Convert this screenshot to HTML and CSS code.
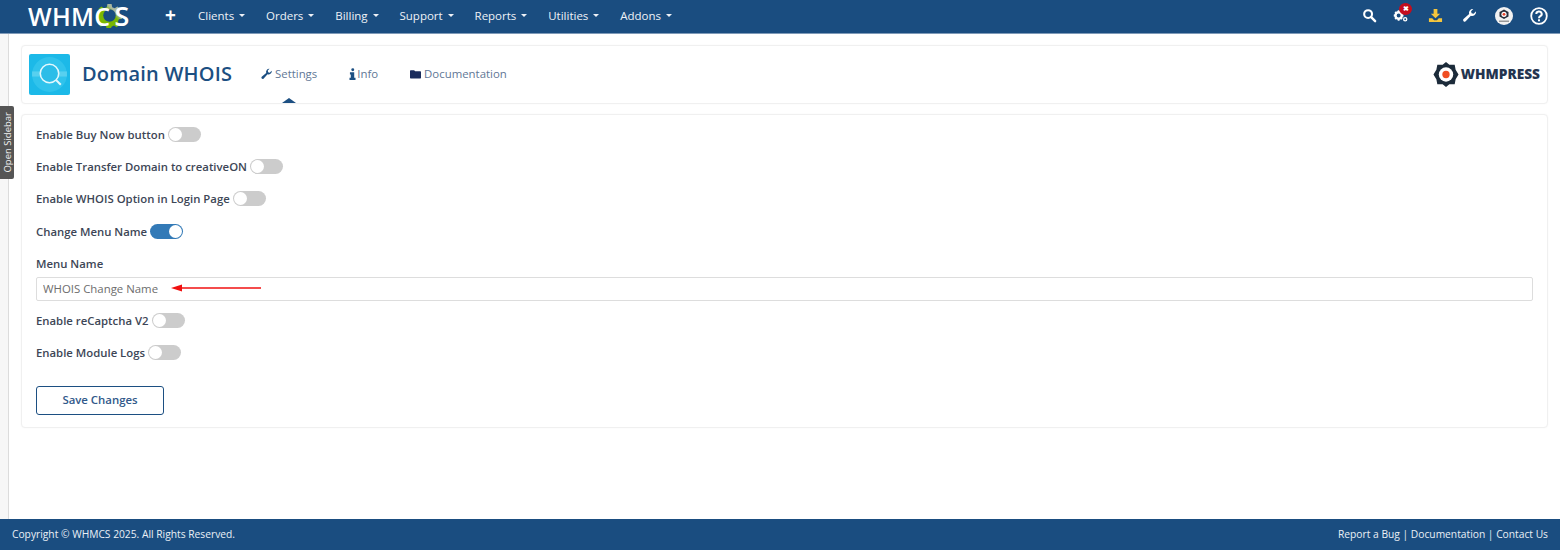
FILE: index.html
```html
<!DOCTYPE html>
<html lang="en">
<head>
<meta charset="utf-8">
<title>Domain WHOIS</title>
<link rel="stylesheet" href="styles.css">
</head>
<body>
<div class="app">
  <header class="topbar">
    <div class="logo"><svg class="logo-gear" viewBox="0 0 24 24"><defs><linearGradient id="gg" x1="0" y1="1" x2="1" y2="0"><stop offset="0.6" stop-color="#7ab800"/><stop offset="0.72" stop-color="#a9b7a0"/></linearGradient></defs><path fill="url(#gg)" d="M10 1h4l.6 3 2.400 1 2.600-1.700 2.800 2.800L20.700 8.700l1 2.300 2.300.6v3.400l-3 .6-1 2.400 1.700 2.600-2.800 2.800-2.600-1.700-2.400 1-.6 2.300h-4l-.6-3-2.400-1-2.600 1.700-2.800-2.800 1.700-2.600-1-2.400-3-.6v-3.400l3-.6 1-2.400L1.300 6.100l2.800-2.800L6.700 5l2.700-1z"/><circle cx="12" cy="12" r="6" fill="#1a4d80"/></svg><span class="logo-text">WHMC<span class="logo-s">S</span></span></div>
    <nav class="mainnav">
      <span class="plus">+</span>
      <a class="navitem">Clients<i class="caret"></i></a>
      <a class="navitem">Orders<i class="caret"></i></a>
      <a class="navitem">Billing<i class="caret"></i></a>
      <a class="navitem">Support<i class="caret"></i></a>
      <a class="navitem">Reports<i class="caret"></i></a>
      <a class="navitem">Utilities<i class="caret"></i></a>
      <a class="navitem">Addons<i class="caret"></i></a>
    </nav>
    <div class="tools">
      <svg class="tool" viewBox="0 0 16 16"><circle cx="6.500" cy="6.500" r="4.200" fill="none" stroke="#fff" stroke-width="2.200"/><path d="M9.800 9.800l4.200 4.200" stroke="#fff" stroke-width="2.600" stroke-linecap="round"/></svg>
      <span class="tool-cog">
        <svg class="tool" viewBox="0 0 16 16"><circle cx="6" cy="8" r="3.400" fill="none" stroke="#fff" stroke-width="2.600"/><path d="M6 2.500v2M6 11.500v2M.8 8h2M9.200 8h2M2.300 4.300l1.400 1.400M8.300 10.300l1.400 1.400M9.700 4.300L8.300 5.700M3.700 10.300l-1.400 1.400" stroke="#fff" stroke-width="2"/><circle cx="13" cy="12" r="1.700" fill="none" stroke="#fff" stroke-width="1.400"/></svg>
        <b class="badge">&#10006;</b>
      </span>
      <svg class="tool tool-dl" viewBox="0 0 16 16"><path fill="#f5c53d" d="M6 1h4v5h3l-5 5-5-5h3z"/><path fill="#f5c53d" d="M1 11h3.500l2 2h3l2-2H15v4H1z"/></svg>
      <svg class="tool tool-wrench" viewBox="0 0 16 16"><path fill="#fff" d="M15 4.300a4.200 4.200 0 0 1-5.600 4L4 14.200a1.700 1.700 0 0 1-2.400-2.400L7.600 6.500A4.200 4.200 0 0 1 12 1l-2.300 2.400.5 2.200 2.200.6L14.700 3.700c.2.200.3.400.3.600z"/></svg>
      <svg class="tool tool-avatar" viewBox="0 0 18 18"><circle cx="9" cy="9" r="9" fill="#f2f2f2"/><path fill="#2a2f3c" d="M9 2.500l4.500 2.400v4.700L9 12 4.500 9.600V4.900z"/><circle cx="9" cy="7.300" r="2.600" fill="#fff"/><circle cx="9" cy="7.300" r="1.400" fill="#e8432a"/><rect x="4" y="13.500" width="10" height="1.500" fill="#999"/></svg>
      <svg class="tool tool-help" viewBox="0 0 18 18"><circle cx="9" cy="9" r="7.800" fill="none" stroke="#fff" stroke-width="1.800"/><path d="M6.300 7a2.700 2.500 0 1 1 4 2.200c-.9.600-1.300 1-1.300 2" fill="none" stroke="#fff" stroke-width="2"/><rect x="8" y="12.300" width="2" height="2" fill="#fff"/></svg>
    </div>
  </header>

  <div class="body-row">
    <aside class="rail"></aside>
    <main class="content">
      <section class="card head">
        <div class="head-left">
          <svg class="mod-icon" viewBox="0 0 40 40"><rect width="40" height="40" rx="2" fill="#1cb9e8"/><circle cx="20" cy="20" r="17" fill="#30c3ec"/><rect x="3" y="17" width="34" height="5" fill="#58d0ef"/><circle cx="20" cy="19" r="9" fill="#2cbde8" stroke="#e4f8fd" stroke-width="1.500"/><path d="M26.500 25.500L31 30" stroke="#e4f8fd" stroke-width="2"/></svg>
          <h1>Domain WHOIS</h1>
          <nav class="tabs">
            <a class="tab active"><svg class="tab-ico" viewBox="0 0 16 16"><path fill="#1c4f82" d="M15 4.300a4.200 4.200 0 0 1-5.600 4L4 14.200a1.700 1.700 0 0 1-2.400-2.400L7.600 6.500A4.200 4.200 0 0 1 12 1l-2.300 2.400.5 2.200 2.200.6L14.700 3.700c.2.200.3.400.3.600z"/></svg>Settings</a>
            <a class="tab tab-info"><svg class="tab-ico" viewBox="0 0 8 14"><circle cx="4.300" cy="2" r="1.700" fill="#1c4f82"/><path fill="#1c4f82" d="M1 5h5v6.500h1.500V14h-7v-2.500H2V7.500H1z"/></svg>Info</a>
            <a class="tab tab-doc"><svg class="tab-ico" viewBox="0 0 16 13"><path fill="#1a2c5c" d="M0 2a1 1 0 0 1 1-1h5l1.500 1.500H15a1 1 0 0 1 1 1V12a1 1 0 0 1-1 1H1a1 1 0 0 1-1-1z"/></svg>Documentation</a>
          </nav>
        </div>
        <div class="brand">
          <svg class="brand-ico" viewBox="0 0 26 28"><path fill="#1c2b3a" d="M13 1l3.500 3H22l1 5 3 5-3 5-1 5h-5.500L13 27l-3.500-3H4l-1-5-3-5 3-5 1-5h5.500z"/><circle cx="13" cy="14" r="7.500" fill="#fff"/><circle cx="13" cy="14" r="3.800" fill="#f04e23"/></svg>
          <span>WHMPRESS</span>
        </div>
      </section>

      <section class="card form">
        <div class="row"><label>Enable Buy Now button</label><span class="switch"></span></div>
        <div class="row"><label>Enable Transfer Domain to creativeON</label><span class="switch"></span></div>
        <div class="row"><label>Enable WHOIS Option in Login Page</label><span class="switch"></span></div>
        <div class="row"><label>Change Menu Name</label><span class="switch on"></span></div>
        <div class="field">
          <label>Menu Name</label>
          <div class="input-wrap">
            <input class="input" type="text" value="WHOIS Change Name">
            <svg class="arrow" viewBox="0 0 90 10"><path d="M8 5h82" stroke="#f01010" stroke-width="1.500"/><path d="M0 5l11-3.500v7z" fill="#f01010"/></svg>
          </div>
        </div>
        <div class="row"><label>Enable reCaptcha V2</label><span class="switch"></span></div>
        <div class="row"><label>Enable Module Logs</label><span class="switch"></span></div>
        <button class="save" type="button">Save Changes</button>
      </section>
    </main>
  </div>

  <footer class="footer">
    <span>Copyright © WHMCS 2025. All Rights Reserved.</span>
    <span>Report a Bug | Documentation | Contact Us</span>
  </footer>
  <div class="sidebar-tab"><span>Open Sidebar</span></div>
</div>
</body>
</html>
```
FILE: styles.css
```css
* { box-sizing: border-box; }
html, body { margin: 0; height: 100%; background: #fff; }
body { font-family: "Open Sans", "Liberation Sans", sans-serif; color: #333; overflow: hidden; }
.app { height: 550px; display: flex; flex-direction: column; position: relative; }

.topbar { height: 34px; flex: none; background: #1a4d80; border-bottom: 1px solid #7f9ab8; display: flex; align-items: center; color: #fff; padding-bottom: 2px; }
.logo { width: 143px; padding-left: 28px; display: flex; align-items: center; color: #fff; position: relative; height: 32px; }
.logo-text { position: relative; font: 600 25px/1 "Open Sans", sans-serif; letter-spacing: 0.3px; white-space: nowrap; }
.logo-s { font-size: 27px; margin-left: 4px; }
.logo-gear { position: absolute; left: 97px; top: 3px; width: 25px; height: 25px; }
.mainnav { display: flex; align-items: center; flex: 1; height: 100%; }
.plus { font-size: 19px; font-weight: 700; width: 55px; text-align: center; line-height: 1; }
.navitem { font-size: 11.500px; font-weight: 500; color: #eef2f7; margin-right: 20.900px; display: inline-flex; align-items: center; white-space: nowrap; }
.caret { display: inline-block; margin-left: 5px; border-left: 3.500px solid transparent; border-right: 3.500px solid transparent; border-top: 3.500px solid #eef2f7; }
.tools { display: flex; align-items: center; gap: 17px; padding-right: 12px; }
.tool { width: 15px; height: 15px; display: block; }
.tool-cog { position: relative; display: block; margin-left: -1px; }
.tool-dl { margin-left: 3px; }
.tool-wrench { margin-left: 2px; }
.tool-avatar { margin-left: 1px; }
.badge { position: absolute; left: 6px; top: -5px; width: 13px; height: 12px; border-radius: 50%; background: #c40d1e; color: #fff; font-size: 7px; line-height: 12px; text-align: center; font-weight: 700; }
.tool-avatar, .tool-help { width: 18px; height: 18px; }

.body-row { flex: 1; display: flex; min-height: 0; }
.rail { width: 9px; flex: none; background: #f7f7f7; border-right: 1px solid #dcdcdc; }
.content { flex: 1; padding: 11px 12px 0 12px; display: flex; flex-direction: column; gap: 10px; }
.card { background: #fff; border: 1px solid #f0f0f0; border-radius: 4px; box-shadow: 0 0 2px rgba(0,0,0,.04); }

.head { height: 59px; display: flex; align-items: center; justify-content: space-between; padding: 0 7px; }
.head-left { display: flex; align-items: center; height: 100%; }
.mod-icon { width: 41px; height: 41px; flex: none; }
h1 { font-size: 20px; font-weight: 600; color: #1c4f82; margin: 0 0 2px 12px; width: 178px; letter-spacing: 0.2px; white-space: nowrap; }
.tabs { display: flex; align-items: center; height: 100%; }
.tab { font-size: 11.400px; color: #5f7796; display: inline-flex; align-items: center; position: relative; height: 100%; white-space: nowrap; padding-bottom: 2px; }
.tab-ico { width: 13px; height: 12px; margin-right: 2px; flex: none; }
.tab-info { margin-left: 32px; }
.tab-info .tab-ico { width: 7px; margin-right: 1px; }
.tab-doc { margin-left: 32px; }
.tab-doc .tab-ico { width: 11px; height: 10px; margin-right: 3px; }
.tab.active::after { content: ""; position: absolute; left: 22px; bottom: 0; border-left: 7px solid transparent; border-right: 7px solid transparent; border-bottom: 5px solid #1c4f82; }
.brand { display: flex; align-items: center; gap: 2px; font: 800 13.700px/1 "Open Sans", sans-serif; color: #24344f; padding-bottom: 1px; }
.brand-ico { width: 26px; height: 27px; }

.form { height: 314px; padding: 3px 14px 0 14px; display: flex; flex-direction: column; align-items: flex-start; }
.row { display: flex; align-items: center; height: 32.300px; gap: 3px; }
label { font-size: 11.350px; font-weight: 600; color: #3d4656; white-space: nowrap; }
.switch { width: 33px; height: 15px; border-radius: 8px; background: #ccc; position: relative; flex: none; }
.switch::after { content: ""; position: absolute; left: 1px; top: 1px; width: 13px; height: 13px; border-radius: 50%; background: #fff; }
.switch.on { background: #337ab7; }
.switch.on::after { left: 19px; }
.field { width: 100%; padding-top: 8.500px; height: 57px; }
.field label { display: block; line-height: 16px; }
.input-wrap { position: relative; margin-top: 5px; }
.input { display: block; width: 100%; height: 24px; border: 1px solid #ddd; border-radius: 2px; padding: 0 6px; font: 11.400px "Open Sans", sans-serif; color: #6d6d6d; background: #fff; }
.arrow { position: absolute; left: 135px; top: 6px; width: 90px; height: 10px; }
.save { margin-top: 17.400px; width: 128px; height: 29px; background: #fff; border: 1px solid #1c4f82; border-radius: 3px; font: 600 11.400px "Open Sans", sans-serif; color: #31598a; padding: 0 0 2px; }

.footer { margin-top: auto; height: 31px; flex: none; background: #1a4d80; display: flex; align-items: center; justify-content: space-between; padding: 0 12px 1px; font-size: 10.250px; color: #eaf0f6; }
.sidebar-tab { position: absolute; left: 0; top: 106px; width: 14px; height: 73px; background: #555; border-radius: 0 2px 2px 0; display: flex; align-items: center; justify-content: center; }
.sidebar-tab span { writing-mode: vertical-rl; transform: rotate(180deg); font-size: 9.500px; color: #f0f0f0; white-space: nowrap; }
```
